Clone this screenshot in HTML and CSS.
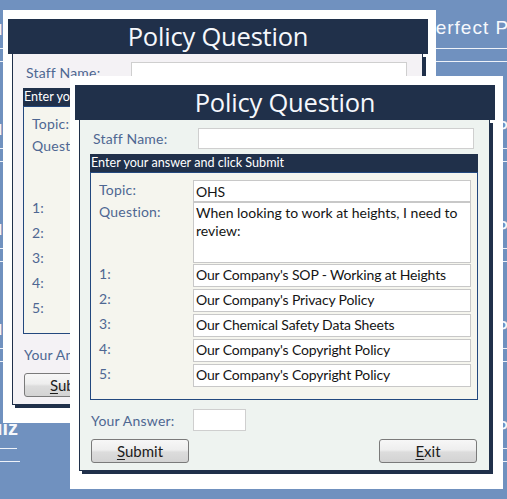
FILE: index.html
```html
<!DOCTYPE html>
<html>
<head>
<meta charset="utf-8">
<link rel="stylesheet" href="styles.css">
</head>
<body>
<div class="desktop">
  <div class="bg-rows">
    <div class="bg-row"><div class="bg-left"><div class="bg-quiz-wrap"><span class="bg-quiz">Quiz</span></div><i class="bl1"></i><i class="bl2"></i></div><div class="bg-right"><div class="bg-title">Perfect Policy Quiz</div><i class="br"></i></div></div>
    <div class="bg-row"><div class="bg-left"><div class="bg-quiz-wrap"><span class="bg-quiz">Quiz</span></div><i class="bl1"></i><i class="bl2"></i></div><div class="bg-right"><div class="bg-title">Perfect Policy Quiz</div><i class="br"></i></div></div>
    <div class="bg-row"><div class="bg-left"><div class="bg-quiz-wrap"><span class="bg-quiz">Quiz</span></div><i class="bl1"></i><i class="bl2"></i></div><div class="bg-right"><div class="bg-title">Perfect Policy Quiz</div><i class="br"></i></div></div>
    <div class="bg-row"><div class="bg-left"><div class="bg-quiz-wrap"><span class="bg-quiz">Quiz</span></div><i class="bl1"></i><i class="bl2"></i></div><div class="bg-right"><div class="bg-title">Perfect Policy Quiz</div><i class="br"></i></div></div>
    <div class="bg-row"><div class="bg-left"><div class="bg-quiz-wrap"><span class="bg-quiz">Quiz</span></div><i class="bl1"></i><i class="bl2"></i></div><div class="bg-right"><div class="bg-title">Perfect Policy Quiz</div><i class="br"></i></div></div>
  </div>

  <div class="window back">
    <div class="titlebar">Policy Question</div>
    <div class="form">
      <div class="staff-row"><span class="lbl">Staff Name:</span><div class="input staff-input"></div></div>
      <div class="sec-head">Enter your answer and click Submit</div>
      <div class="sec-body">
        <div class="q-row"><span class="lbl">Topic:</span><div class="field f-topic">OHS</div></div>
        <div class="q-row"><span class="lbl">Question:</span><div class="field f-question">When looking to work at heights, I need to review:</div></div>
        <div class="q-row ans first"><span class="lbl">1:</span><div class="field">Our Company's SOP - Working at Heights</div></div>
        <div class="q-row ans"><span class="lbl">2:</span><div class="field">Our Company's Privacy Policy</div></div>
        <div class="q-row ans"><span class="lbl">3:</span><div class="field">Our Chemical Safety Data Sheets</div></div>
        <div class="q-row ans"><span class="lbl">4:</span><div class="field">Our Company's Copyright Policy</div></div>
        <div class="q-row ans"><span class="lbl">5:</span><div class="field">Our Company's Copyright Policy</div></div>
      </div>
      <div class="answer-row"><span class="lbl">Your Answer:</span><div class="input ans-input"></div></div>
      <div class="btn-row"><button class="btn"><u>S</u>ubmit</button><button class="btn"><u>E</u>xit</button></div>
    </div>
  </div>

  <div class="window front">
    <div class="titlebar">Policy Question</div>
    <div class="form">
      <div class="staff-row"><span class="lbl">Staff Name:</span><div class="input staff-input"></div></div>
      <div class="sec-head">Enter your answer and click Submit</div>
      <div class="sec-body">
        <div class="q-row"><span class="lbl">Topic:</span><div class="field f-topic">OHS</div></div>
        <div class="q-row"><span class="lbl">Question:</span><div class="field f-question">When looking to work at heights, I need to review:</div></div>
        <div class="q-row ans first"><span class="lbl">1:</span><div class="field">Our Company's SOP - Working at Heights</div></div>
        <div class="q-row ans"><span class="lbl">2:</span><div class="field">Our Company's Privacy Policy</div></div>
        <div class="q-row ans"><span class="lbl">3:</span><div class="field">Our Chemical Safety Data Sheets</div></div>
        <div class="q-row ans"><span class="lbl">4:</span><div class="field">Our Company's Copyright Policy</div></div>
        <div class="q-row ans"><span class="lbl">5:</span><div class="field">Our Company's Copyright Policy</div></div>
      </div>
      <div class="answer-row"><span class="lbl">Your Answer:</span><div class="input ans-input"></div></div>
      <div class="btn-row"><button class="btn"><u>S</u>ubmit</button><button class="btn"><u>E</u>xit</button></div>
    </div>
  </div>
</div>
</body>
</html>
```

FILE: styles.css
```css
html, body {
  margin: 0;
  padding: 0;
}

.desktop {
  position: relative;
  width: 507px;
  height: 499px;
  overflow: hidden;
  background: #7091bf;
  font-family: Lato, "Open Sans", sans-serif;
}

/* background continuous form */
.bg-rows {
  display: flex;
  flex-direction: column;
}

.bg-row {
  height: 100px;
  display: flex;
  flex: none;
}

.bg-left {
  width: 18px;
  flex: none;
  display: flex;
  flex-direction: column;
}

.bg-quiz-wrap {
  width: 18px;
  height: 24px;
  margin-top: 16px;
  display: flex;
  justify-content: flex-end;
}

.bg-quiz {
  font: bold 20px/24px "Liberation Sans", Arial, sans-serif;
  color: #f6f8fc;
  white-space: nowrap;
}

.bl1, .bl2 {
  display: block;
  border-top: 1px solid #eef2f9;
}

.bl1 {
  width: 17px;
  margin-top: 8px;
}

.bl2 {
  width: 20px;
  margin-top: 12px;
}

.bg-right {
  margin-left: 404px;
  flex: 1;
  display: flex;
  flex-direction: column;
}

.bg-title {
  margin-top: 16px;
  height: 24px;
  font: 19px/24px "Liberation Sans", Arial, sans-serif;
  letter-spacing: 1px;
  color: #f6f8fc;
  white-space: nowrap;
}

.br {
  display: block;
  height: 12px;
  margin-top: 8px;
  border-top: 1px solid #eef2f9;
  border-bottom: 1px solid #eef2f9;
}

/* windows */
.window {
  position: absolute;
  width: 433px;
  height: 413px;
  background: #ffffff;
  padding: 9px 0 0 5px;
  box-sizing: border-box;
}

.back {
  left: 3px;
  top: 10px;
}

.front {
  left: 70px;
  top: 76px;
}

.titlebar {
  width: 420px;
  height: 35px;
  background: #20304a;
  color: #f6f8fc;
  font-family: "Open Sans", sans-serif;
  font-size: 25.5px;
  line-height: 34px;
  text-align: center;
  letter-spacing: -0.2px;
}

.form {
  margin-left: 4px;
  width: 411px;
  height: 351px;
  box-sizing: border-box;
  border: 1px solid #20304a;
  border-top: none;
  box-shadow: 3px 3px 0 #20304a;
  padding: 8px 11px 0 10px;
  background: #eef3f0;
  display: flex;
  flex-direction: column;
}

.back .form {
  background: #f4f2f5;
}

.lbl {
  color: #4e6792;
  font-size: 14px;
  line-height: 19px;
  letter-spacing: 0.2px;
  white-space: nowrap;
}

.input {
  background: #ffffff;
  border: 1px solid #cfcfcf;
  box-sizing: border-box;
}

.staff-row {
  display: grid;
  grid-template-columns: 108px 276px;
  align-items: center;
  height: 21px;
}

.staff-row .lbl {
  padding-left: 3px;
}

.staff-input {
  height: 21px;
}

.sec-head {
  margin-top: 5px;
  height: 18px;
  background: #20304a;
  color: #ffffff;
  font-size: 12.6px;
  line-height: 18px;
  padding-left: 1px;
  white-space: nowrap;
  overflow: hidden;
}

.sec-body {
  height: 228px;
  box-sizing: border-box;
  border: 1px solid #23487e;
  background: #f5f5ee;
  padding: 7px 0 0 8px;
  display: flex;
  flex-direction: column;
}

.q-row {
  display: flex;
  align-items: flex-start;
}

.q-row .lbl {
  width: 94px;
  flex: none;
}

.field {
  width: 278px;
  flex: none;
  box-sizing: border-box;
  border: 1px solid #c8c8c8;
  background: #ffffff;
  color: #141414;
  font-size: 14px;
  line-height: 19px;
  letter-spacing: -0.15px;
  padding: 0 2px;
  white-space: nowrap;
  overflow: hidden;
}

.f-topic {
  height: 22px;
  padding-top: 1px;
}

.f-question {
  height: 61px;
  line-height: 17.5px;
  padding-top: 1px;
  white-space: normal;
  letter-spacing: 0;
}

.ans .field {
  height: 23px;
}

.ans {
  margin-top: 2px;
}

.ans.first {
  margin-top: 1px;
}

.answer-row {
  margin-top: 9px;
  display: grid;
  grid-template-columns: 103px 53px;
  align-items: center;
  height: 22px;
}

.answer-row .lbl {
  padding-left: 1px;
}

.ans-input {
  height: 22px;
}

.btn-row {
  margin-top: 8px;
  display: flex;
  justify-content: space-between;
  padding: 0 1px;
}

.btn {
  width: 98px;
  height: 24px;
  margin: 0;
  padding: 0;
  border: 1px solid #7a7a7a;
  border-radius: 3px;
  background: linear-gradient(#f7f7f7 0%, #eeeeee 45%, #dcdcdc 55%, #d3d3d3 100%);
  font-family: Lato, sans-serif;
  font-size: 15px;
  color: #1c1c1c;
  line-height: 22px;
}

.btn u {
  text-decoration: underline;
  text-underline-offset: 2px;
}
```
